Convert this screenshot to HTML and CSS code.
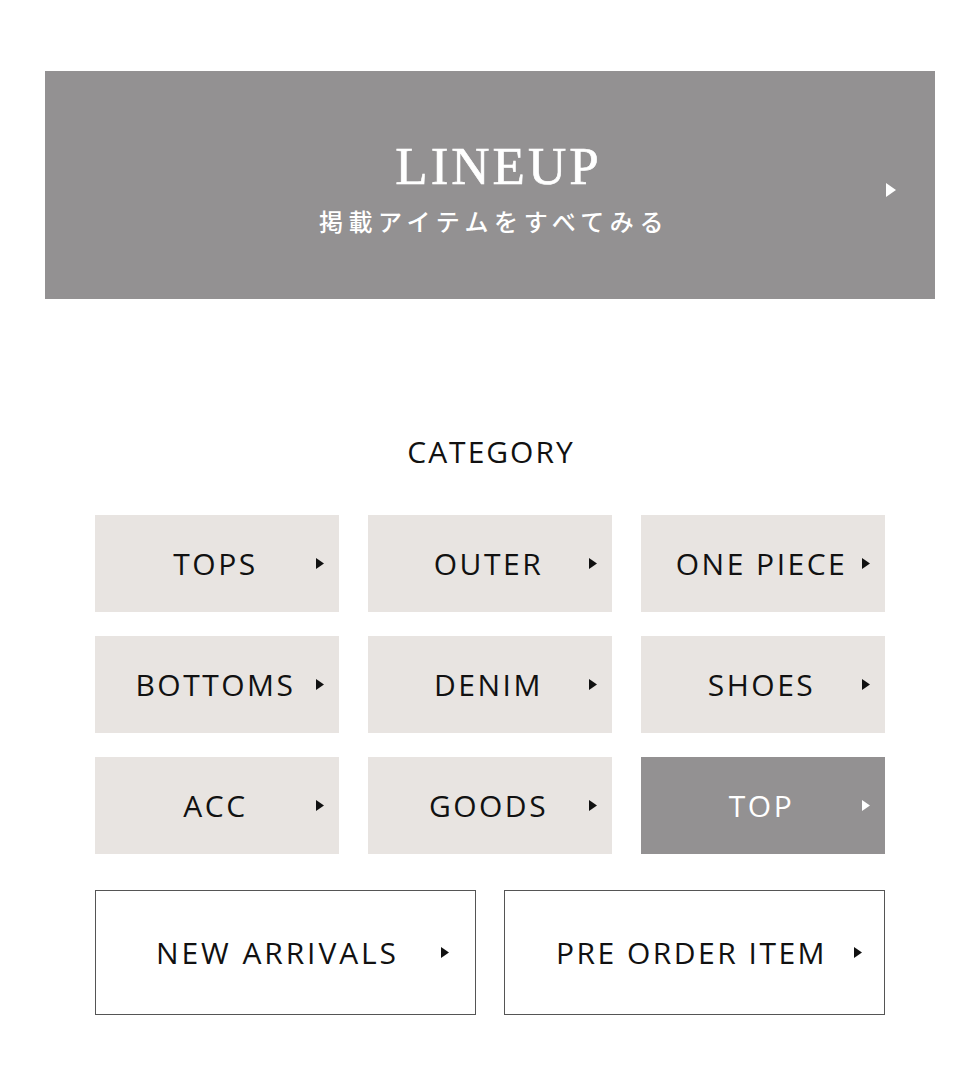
FILE: index.html
```html
<!DOCTYPE html>
<html lang="ja">
<head>
<meta charset="utf-8">
<link rel="stylesheet" href="styles.css">
</head>
<body>
<div class="page">
  <a class="lineup" href="#">
    <span class="lineup-text">
      <span class="lineup-title">LINEUP</span>
      <span class="lineup-sub">掲載アイテムをすべてみる</span>
    </span>
    <svg class="lineup-arrow" viewBox="0 0 10 14"><path d="M0 0L10 7L0 14Z" fill="#fff"/></svg>
  </a>

  <section class="category">
    <h2 class="category-title">CATEGORY</h2>
    <div class="tiles">
      <a class="tile" href="#"><span class="label">TOPS</span><svg class="arrow" viewBox="0 0 8 11"><path d="M0 0L8 5.5L0 11Z"/></svg></a>
      <a class="tile" href="#"><span class="label">OUTER</span><svg class="arrow" viewBox="0 0 8 11"><path d="M0 0L8 5.5L0 11Z"/></svg></a>
      <a class="tile" href="#"><span class="label">ONE PIECE</span><svg class="arrow" viewBox="0 0 8 11"><path d="M0 0L8 5.5L0 11Z"/></svg></a>
      <a class="tile" href="#"><span class="label">BOTTOMS</span><svg class="arrow" viewBox="0 0 8 11"><path d="M0 0L8 5.5L0 11Z"/></svg></a>
      <a class="tile" href="#"><span class="label">DENIM</span><svg class="arrow" viewBox="0 0 8 11"><path d="M0 0L8 5.5L0 11Z"/></svg></a>
      <a class="tile" href="#"><span class="label">SHOES</span><svg class="arrow" viewBox="0 0 8 11"><path d="M0 0L8 5.5L0 11Z"/></svg></a>
      <a class="tile" href="#"><span class="label">ACC</span><svg class="arrow" viewBox="0 0 8 11"><path d="M0 0L8 5.5L0 11Z"/></svg></a>
      <a class="tile" href="#"><span class="label">GOODS</span><svg class="arrow" viewBox="0 0 8 11"><path d="M0 0L8 5.5L0 11Z"/></svg></a>
      <a class="tile tile-dark" href="#"><span class="label">TOP</span><svg class="arrow" viewBox="0 0 8 11"><path d="M0 0L8 5.5L0 11Z"/></svg></a>
    </div>
    <div class="buttons">
      <a class="button" href="#"><span class="label">NEW ARRIVALS</span><svg class="arrow" viewBox="0 0 8 11"><path d="M0 0L8 5.5L0 11Z"/></svg></a>
      <a class="button button-alt" href="#"><span class="label">PRE ORDER ITEM</span><svg class="arrow" viewBox="0 0 8 11"><path d="M0 0L8 5.5L0 11Z"/></svg></a>
    </div>
  </section>
</div>
</body>
</html>
```

FILE: styles.css
```css
* { box-sizing: border-box; }
html, body { margin: 0; padding: 0; background: #fff; }
a { text-decoration: none; color: inherit; }

.page {
  width: 980px;
  padding: 71px 45px 0;
}

.lineup {
  display: flex;
  align-items: center;
  height: 228px;
  background: #939192;
  color: #fff;
}
.lineup-text {
  flex: 1;
  display: flex;
  flex-direction: column;
  align-items: center;
  padding-left: 55px;
  padding-top: 4px;
}
.lineup-title {
  font-family: "Liberation Serif", "Times New Roman", serif;
  font-size: 53px;
  line-height: 60px;
  letter-spacing: 3px;
  padding-left: 11px;
  -webkit-text-stroke: 0.6px #fff;
}
.lineup-sub {
  font-family: "Noto Sans CJK JP", sans-serif;
  font-weight: 500;
  font-size: 24px;
  line-height: 34px;
  letter-spacing: 5.6px;
  margin-top: 8px;
  padding-left: 2px;
}
.lineup-arrow {
  width: 10px;
  height: 14px;
  flex: none;
  margin-right: 39px;
  margin-top: 10px;
}

.category {
  padding: 0 50px;
  font-family: "Open Sans", "Noto Sans", sans-serif;
  color: #111;
}
.category-title {
  margin: 135px 0 0;
  font-weight: 400;
  font-size: 30px;
  line-height: 36px;
  letter-spacing: 2px;
  text-align: center;
  padding-left: 2px;
}

.tiles {
  margin-top: 45px;
  display: grid;
  grid-template-columns: repeat(3, 1fr);
  gap: 24px 29px;
}
.tile {
  display: flex;
  align-items: center;
  height: 97px;
  background: #e8e4e1;
  padding-left: 20px;
}
.tile-dark {
  background: #939192;
  color: #fff;
}
.tile-dark .arrow path { fill: #fff; }

.label {
  flex: 1;
  text-align: center;
  font-size: 30px;
  letter-spacing: 2.5px;
  line-height: 36px;
}
.arrow {
  width: 8px;
  height: 11px;
  flex: none;
  margin-right: 15px;
}
.arrow path { fill: #111; }

.buttons {
  margin-top: 36px;
  display: grid;
  grid-template-columns: 1fr 1fr;
  gap: 28px;
}
.button {
  display: flex;
  align-items: center;
  height: 125px;
  border: 1px solid #555;
  padding-left: 18px;
}
.button .label {
  letter-spacing: 2.9px;
}
.button .arrow {
  margin-right: 26px;
}
.button-alt {
  padding-left: 24px;
}
.button-alt .label {
  letter-spacing: 2.5px;
}
.button-alt .arrow {
  margin-right: 22px;
}
```
